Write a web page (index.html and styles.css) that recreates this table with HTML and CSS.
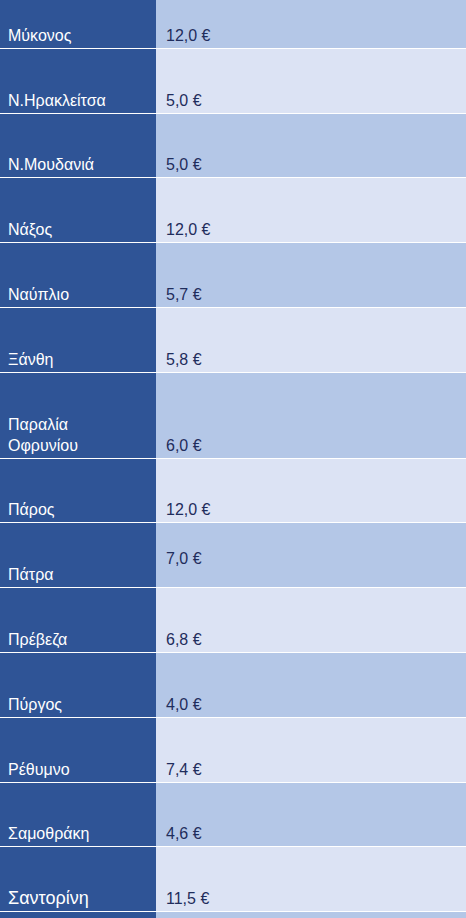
FILE: index.html
```html
<!DOCTYPE html>
<html>
<head>
    <title>Τιμές</title>
    <link rel="stylesheet" href="styles.css">
</head>
<body>
    <table class="prices">
        <tr class="odd"><td class="place">Μύκονος</td><td class="price">12,0 €</td></tr>
        <tr class="even"><td class="place">Ν.Ηρακλείτσα</td><td class="price">5,0 €</td></tr>
        <tr class="odd"><td class="place">Ν.Μουδανιά</td><td class="price">5,0 €</td></tr>
        <tr class="even"><td class="place">Νάξος</td><td class="price">12,0 €</td></tr>
        <tr class="odd"><td class="place">Ναύπλιο</td><td class="price">5,7 €</td></tr>
        <tr class="even"><td class="place">Ξάνθη</td><td class="price">5,8 €</td></tr>
        <tr class="odd"><td class="place">Παραλία<br>Οφρυνίου</td><td class="price">6,0 €</td></tr>
        <tr class="even"><td class="place">Πάρος</td><td class="price">12,0 €</td></tr>
        <tr class="odd"><td class="place">Πάτρα</td><td class="price middle">7,0 €</td></tr>
        <tr class="even"><td class="place">Πρέβεζα</td><td class="price">6,8 €</td></tr>
        <tr class="odd"><td class="place">Πύργος</td><td class="price">4,0 €</td></tr>
        <tr class="even"><td class="place">Ρέθυμνο</td><td class="price">7,4 €</td></tr>
        <tr class="odd"><td class="place">Σαμοθράκη</td><td class="price">4,6 €</td></tr>
        <tr class="even"><td class="place big">Σαντορίνη</td><td class="price">11,5 €</td></tr>
        <tr class="odd"><td class="place"></td><td class="price"></td></tr>
    </table>
</body>
</html>
```
FILE: styles.css
```css
body {
    margin: 0;
    background-color: #ffffff;
    font-family: "Liberation Sans", Arial, sans-serif;
    overflow: hidden;
}
.prices {
    width: 466px;
    margin-top: -16px;
    border-collapse: collapse;
    font-size: 16px;
    line-height: 21px;
}
.prices td {
    padding: 40.8px 8px 2px 8px;
    vertical-align: bottom;
    border-bottom: 1px solid #ffffff;
}
.place {
    width: 140px;
    background-color: #2f5496;
    color: #ffffff;
}
.place.big {
    font-size: 18px;
}
.prices .price {
    padding-left: 10px;
    color: #1f2d5c;
}
.odd .price {
    background-color: #b4c7e7;
}
.even .price {
    background-color: #dce3f4;
}
.prices .price.middle {
    padding-top: 9px;
    vertical-align: middle;
}
```
